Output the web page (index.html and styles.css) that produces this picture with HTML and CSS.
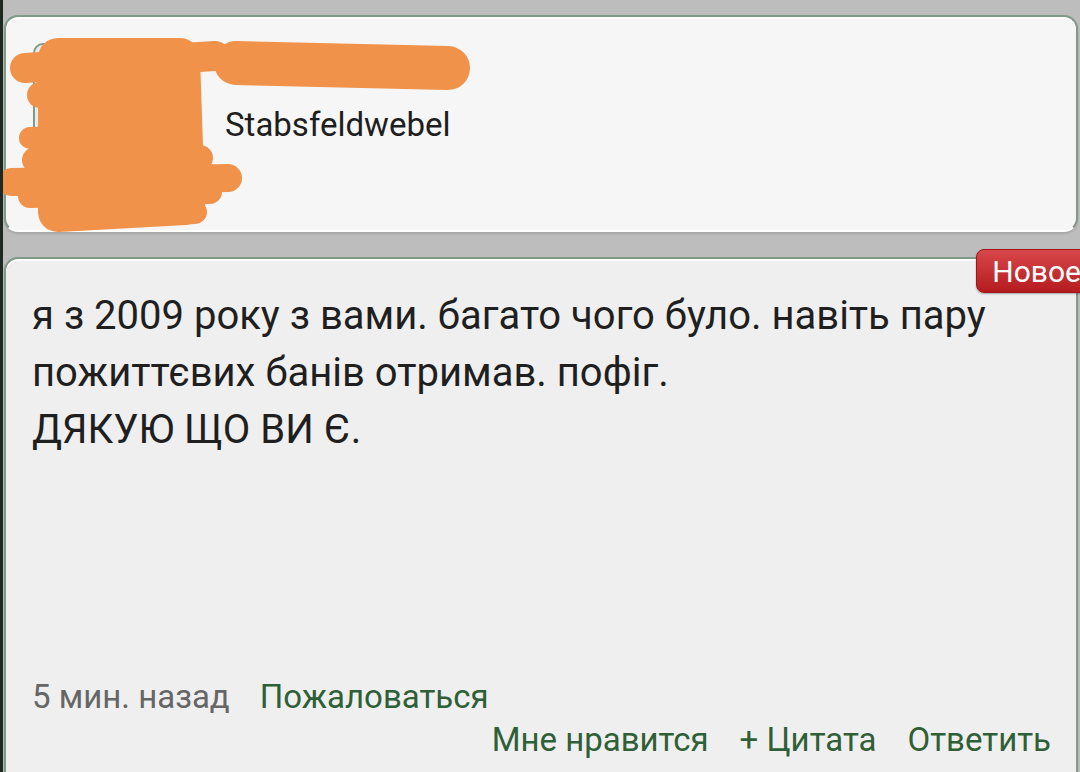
FILE: index.html
```html
<!DOCTYPE html>
<html>
  <head>
    <meta charset="utf-8">
    <meta name="viewport" content="width=device-width,initial-scale=1.0"/>
    <title>Комментарий</title>
    <link rel="stylesheet" href="styles.css">
  </head>

  <body>
    <div id='screen'>

      <!-- Author card -->
      <div class='card profile'>
        <div class='avatar'></div>
        <span class='rank'>Stabsfeldwebel</span>
      </div>

      <!-- Post -->
      <div class='card post'>
        <span class='badge-new'>Новое</span>
        <div class='post-text'>
          я з 2009 року з вами. багато чого було. навіть пару<br/>
          пожиттєвих банів отримав. пофіг.<br/>
          ДЯКУЮ ЩО ВИ Є.
        </div>
        <div class='post-meta'>
          <span class='time'>5 мин. назад</span>
          <a class='link'>Пожаловаться</a>
        </div>
        <div class='post-actions'>
          <a class='link'>Мне нравится</a>
          <a class='link'>+ Цитата</a>
          <a class='link'>Ответить</a>
        </div>
      </div>

      <!-- redaction scribble over the avatar and nickname -->
      <svg class='scribble' width='480' height='240' viewBox='0 0 480 240'>
        <g stroke='#f0924a' stroke-linecap='round' stroke-linejoin='round' fill='none'>
          <path d='M236 63 L448 68' stroke-width='44'/>
          <path d='M25 68 L215 56' stroke-width='30'/>
          <path d='M58 58 L180 58 L185 205 L58 212 Z' stroke-width='40' fill='#f0924a'/>
          <path d='M40 95 L180 95' stroke-width='26'/>
          <path d='M30 138 L185 132' stroke-width='22'/>
          <path d='M35 160 L200 158' stroke-width='26'/>
          <path d='M12 182 L228 178' stroke-width='28'/>
          <path d='M30 196 L210 192' stroke-width='24'/>
          <path d='M62 218 L195 212' stroke-width='24'/>
        </g>
      </svg>

    </div>
  </body>
</html>
```

FILE: styles.css
```css
* {
  margin: 0;
  padding: 0;
  box-sizing: border-box;
}
html, body {
  overflow: hidden;
}
body {
  background-color: #bdbdbd;
  font-family: Roboto, 'Noto Sans', sans-serif;
  color: #222222;
}
#screen {
  position: relative;
  height: 772px;
  overflow: hidden;
  border-left: 3px solid #1d2a22;
  padding: 15px 2px 0 1px;
}
.card {
  border: 2px solid #7f9a85;
  border-radius: 14px;
  box-shadow: inset 0 2px 0 #ffffff, 0 2px 2px rgba(0, 0, 0, 0.12);
}
.profile {
  height: 217px;
  background-color: #f6f6f6;
  border-bottom-color: #ffffff;
  display: flex;
  align-items: center;
}
.avatar {
  width: 166px;
  height: 162px;
  margin-left: 27px;
  border: 2px solid #7f9a85;
  border-radius: 10px;
  background-color: #e9ece9;
}
.rank {
  margin-left: 26px;
  margin-top: 2px;
  font-size: 33px;
  color: #1e1e1e;
}
.post {
  position: relative;
  margin-top: 25px;
  height: 540px;
  background-color: #efefef;
  padding: 28px 25px 0 26px;
}
.badge-new {
  position: absolute;
  top: -10px;
  right: -22px;
  padding: 0 16px 0 15px;
  height: 44px;
  line-height: 44px;
  font-size: 30px;
  color: #ffffff;
  background: linear-gradient(#d8474a, #b51c1f);
  border: 1px solid #a11418;
  border-radius: 8px 0 0 8px;
  box-shadow: 0 1px 2px rgba(0, 0, 0, 0.3);
}
.post-text {
  min-height: 390px;
  font-size: 40px;
  line-height: 57px;
  color: #1f1f1f;
}
.post-meta {
  display: flex;
  gap: 30px;
  font-size: 33px;
  line-height: 40px;
}
.time {
  color: #666666;
}
.link {
  color: #2f5f36;
}
.post-actions {
  display: flex;
  justify-content: flex-end;
  gap: 31px;
  margin-top: 3px;
  font-size: 33px;
  line-height: 40px;
}
.scribble {
  position: absolute;
  top: 0;
  left: -3px;
}
```
